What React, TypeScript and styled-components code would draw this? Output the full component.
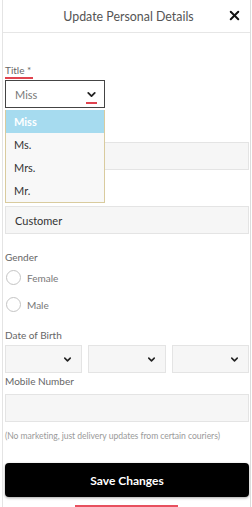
import React from 'react';
import styled, { createGlobalStyle } from 'styled-components';
import { X, ChevronDown } from 'lucide-react';

const GlobalStyle = createGlobalStyle`
  html, body {
    margin: 0;
    padding: 0;
    background: #fff;
    font-family: 'Lato', 'Open Sans', sans-serif;
  }
  * { box-sizing: border-box; }
`;

const Panel = styled.div`
  margin-left: 2px;
  width: 249px;
  height: 507px;
  border-left: 1px solid #e4e4e4;
  border-right: 1px solid #dcdcdc;
  position: relative;
  overflow: hidden;
`;

const Header = styled.div`
  height: 33px;
  border-bottom: 1px solid #e6e6e6;
  display: flex;
  align-items: center;
  justify-content: center;
  position: relative;
`;

const HeaderTitle = styled.h1`
  margin: 0;
  font-size: 12.4px;
  font-weight: 400;
  color: #555;
  padding-left: 4px;
`;

const CloseButton = styled.button`
  position: absolute;
  right: 8px;
  top: 8px;
  border: none;
  background: none;
  padding: 0;
  display: flex;
  color: #111;
`;

const Form = styled.form`
  display: flex;
  flex-direction: column;
  padding: 0 1px 0 2px;
`;

const Field = styled.div<{ $top: number }>`
  display: flex;
  flex-direction: column;
  margin-top: ${p => p.$top}px;
  position: relative;
`;

const Label = styled.label<{ $gap?: number }>`
  font-size: 10px;
  line-height: 14px;
  height: 14px;
  color: #666;
  margin-bottom: ${p => p.$gap ?? 4}px;
`;

const Marked = styled.span`
  display: inline-block;
  border-bottom: 2px solid #e0434f;
  line-height: 13px;
  padding-right: 2px;
`;

const SelectBox = styled.div`
  width: 100px;
  height: 28px;
  border: 1px solid #444;
  display: flex;
  align-items: center;
  justify-content: space-between;
  padding: 0 6px 0 9px;
  font-size: 11px;
  color: #777;
  background: #fff;
`;

const ChevronMark = styled.span`
  display: flex;
  flex-direction: column;
  align-items: center;
  color: #222;
  position: relative;
  &::after {
    content: '';
    position: absolute;
    top: 14px;
    width: 11px;
    height: 2px;
    background: #e0434f;
  }
`;

const OptionList = styled.ul`
  position: absolute;
  left: 0;
  top: 47px;
  width: 100px;
  margin: 0;
  padding: 0;
  list-style: none;
  border: 1px solid #d9cb9e;
  border-top: none;
  background: #f8f8f8;
  z-index: 2;
`;

const OptionItem = styled.li<{ $selected?: boolean }>`
  height: 23px;
  display: flex;
  align-items: center;
  padding-left: 8px;
  font-size: 11px;
  color: ${p => (p.$selected ? '#fff' : '#333')};
  font-weight: ${p => (p.$selected ? 700 : 400)};
  background: ${p => (p.$selected ? '#a6dbef' : 'transparent')};
`;

const TextInput = styled.div`
  height: 28px;
  background: #f6f6f6;
  border: 1px solid #e4e4e4;
  display: flex;
  align-items: center;
  padding-left: 9px;
  font-size: 11px;
  color: #333;
`;

const RadioRow = styled.div<{ $top: number }>`
  display: flex;
  align-items: center;
  gap: 6px;
  margin-top: ${p => p.$top}px;
  padding-left: 1px;
  font-size: 10px;
  color: #777;
`;

const RadioCircle = styled.span`
  width: 15px;
  height: 15px;
  border-radius: 50%;
  border: 1px solid #c4c4c4;
  background: #fff;
`;

const DateRow = styled.div`
  display: grid;
  grid-template-columns: 1fr 1fr 1fr;
  gap: 6px;
`;

const DateSelect = styled.div`
  height: 28px;
  background: #f6f6f6;
  border: 1px solid #e4e4e4;
  display: flex;
  align-items: center;
  justify-content: flex-end;
  padding-right: 8px;
  color: #222;
`;

const Note = styled.p`
  margin: 9px 0 0;
  font-size: 8.6px;
  color: #9a9a9a;
  white-space: nowrap;
  letter-spacing: -0.05px;
`;

const SaveButton = styled.button`
  margin-top: 22px;
  height: 34px;
  border: none;
  border-radius: 4px;
  background: #000;
  color: #fff;
  font-family: inherit;
  font-size: 12px;
  font-weight: 700;
  box-shadow: 0 1px 3px rgba(0, 0, 0, 0.35);
`;

const RedBar = styled.div`
  margin: 8px auto 0;
  width: 103px;
  height: 4px;
  background: #e8505e;
  transform: translateX(-1px);
`;

export default function App() {
  const titles = ['Miss', 'Ms.', 'Mrs.', 'Mr.'];
  return (
    <>
      <GlobalStyle />
      <Panel>
        <Header>
          <HeaderTitle>Update Personal Details</HeaderTitle>
          <CloseButton aria-label="Close">
            <X size={15} strokeWidth={3.2} />
          </CloseButton>
        </Header>
        <Form>
          <Field $top={30}>
            <Label $gap={3}>
              <Marked>Title *</Marked>
            </Label>
            <SelectBox>
              <span>Miss</span>
              <ChevronMark>
                <ChevronDown size={13} strokeWidth={3.4} />
              </ChevronMark>
            </SelectBox>
            <OptionList>
              {titles.map((t, i) => (
                <OptionItem key={t} $selected={i === 0}>
                  {t}
                </OptionItem>
              ))}
            </OptionList>
          </Field>
          {/* labels of these two fields sit under the open list */}
          <Field $top={16}>
            <Label aria-label="First Name" />
            <TextInput />
          </Field>
          <Field $top={18}>
            <Label aria-label="Last Name" />
            <TextInput>Customer</TextInput>
          </Field>
          <Field $top={16}>
            <Label $gap={0}>Gender</Label>
            <RadioRow $top={6}>
              <RadioCircle />
              Female
            </RadioRow>
            <RadioRow $top={12}>
              <RadioCircle />
              Male
            </RadioRow>
          </Field>
          <Field $top={16}>
            <Label $gap={3}>Date of Birth</Label>
            <DateRow>
              <DateSelect>
                <ChevronDown size={11} strokeWidth={3.4} />
              </DateSelect>
              <DateSelect>
                <ChevronDown size={11} strokeWidth={3.4} />
              </DateSelect>
              <DateSelect>
                <ChevronDown size={11} strokeWidth={3.4} />
              </DateSelect>
            </DateRow>
          </Field>
          <Field $top={1}>
            <Label $gap={6}>Mobile Number</Label>
            <TextInput />
          </Field>
          <Note>(No marketing, just delivery updates from certain couriers)</Note>
          <SaveButton type="button">Save Changes</SaveButton>
          <RedBar />
        </Form>
      </Panel>
    </>
  );
}
